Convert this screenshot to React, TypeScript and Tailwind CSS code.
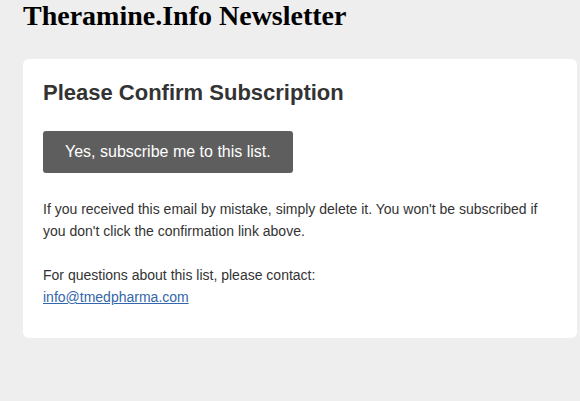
export default function App() {
  return (
    <div className="min-h-[401px] bg-[#eeeeee] pl-[23px] pr-[3px]">
      <h1 className="pt-[2px] text-[28px] leading-[28px] font-bold text-black" style={{ fontFamily: '"Liberation Serif", serif' }}>
        Theramine.Info Newsletter
      </h1>
      <div
        className="mt-[29px] rounded-md bg-white px-5 pt-[20px] pb-[30px] text-[#333333]"
        style={{ fontFamily: '"Liberation Sans", Arial, sans-serif' }}
      >
        <h2 className="text-[22px] leading-[28px] font-bold">Please Confirm Subscription</h2>
        <a
          href="#"
          className="mt-[24px] inline-block rounded-[3px] bg-[#5e5e5e] px-[22px] py-[10px] text-[16px] leading-[22px] text-white"
        >
          Yes, subscribe me to this list.
        </a>
        <p className="mt-[25px] text-[14px] leading-[22px]">
          If you received this email by mistake, simply delete it. You won't be subscribed if you don't click the
          confirmation link above.
        </p>
        <p className="mt-[22px] text-[14px] leading-[22px]">
          For questions about this list, please contact:
          <br />
          <a href="#" className="text-[#3366aa] underline">
            info@tmedpharma.com
          </a>
        </p>
      </div>
    </div>
  );
}
